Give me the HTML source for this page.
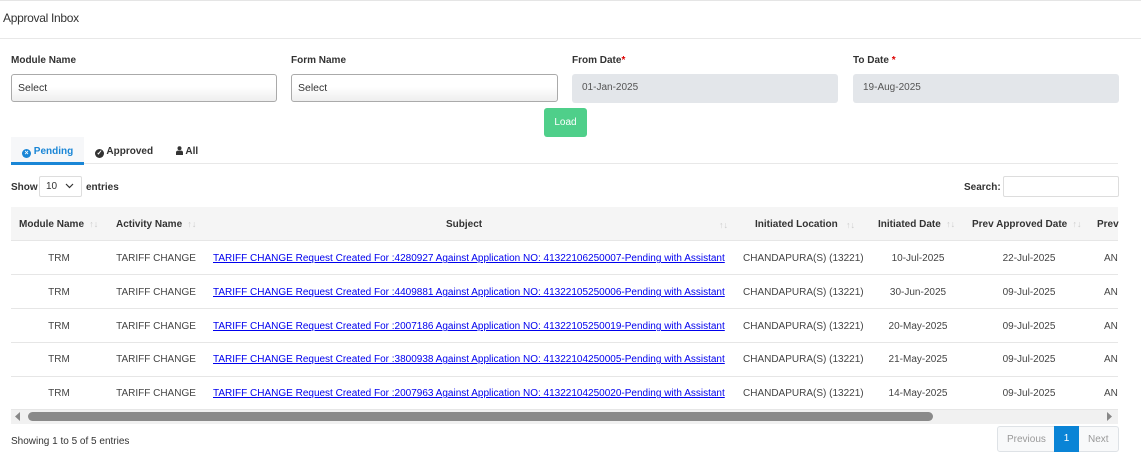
<!DOCTYPE html>
<html><head><meta charset="utf-8"><style>
*{margin:0;padding:0;box-sizing:border-box}
body{width:1141px;height:452px;overflow:hidden;background:#fff;font-family:"Liberation Sans",sans-serif;color:#333;position:relative;font-size:10px}
.a{position:absolute;white-space:nowrap}
.lbl{font-weight:bold;font-size:10px;color:#333}
.inp{position:absolute;height:28px;border:1px solid #aaa;border-radius:3px;background:linear-gradient(#fff,#fff 45%,#eee);font-size:10.5px;padding:7px 6px;color:#333}
.dis{position:absolute;height:29px;border-radius:3px;background:#e3e6ea;font-size:10px;padding:8px 10px;color:#555}
.hd{font-weight:bold;font-size:10px;color:#333}
.s{color:#ccc;font-size:9px}
.c{position:absolute;text-align:center;font-size:10px;color:#444;white-space:nowrap}
.lk{position:absolute;left:213px;color:#0000ee;text-decoration:underline;font-size:10px;letter-spacing:0;white-space:nowrap}
.ln{position:absolute;left:11px;width:1107px;height:1px;background:#e6e6e6}
</style></head><body>
<div style="position:absolute;left:0;top:0;width:1141px;height:1px;background:#e5e5e5"></div>
<div class="a" style="left:3px;top:11px;font-size:12px;color:#333;letter-spacing:-0.3px">Approval Inbox</div>
<div style="position:absolute;left:0;top:38px;width:1141px;height:1px;background:#e8e8e8"></div>

<div class="a lbl" style="left:11px;top:55px">Module Name</div>
<div class="a lbl" style="left:291px;top:55px">Form Name</div>
<div class="a lbl" style="left:572px;top:55px">From Date<span style="color:#d00">*</span></div>
<div class="a lbl" style="left:853px;top:55px">To Date <span style="color:#d00">*</span></div>
<div class="inp" style="left:11px;top:74px;width:266px">Select</div>
<div class="inp" style="left:291px;top:74px;width:267px">Select</div>
<div class="dis" style="left:572px;top:74px;width:266px">01-Jan-2025</div>
<div class="dis" style="left:853px;top:74px;width:266px">19-Aug-2025</div>
<div class="a" style="left:544px;top:108px;width:43px;height:29px;background:#4fcf8a;border-radius:3px;color:#fff;font-size:10px;text-align:center;line-height:29px">Load</div>

<div style="position:absolute;left:11px;top:137px;width:73px;height:26px;background:#f6f7f9"></div>
<div style="position:absolute;left:11px;top:163px;width:1107px;height:1px;background:#e8e8e8"></div>
<div style="position:absolute;left:11px;top:162px;width:73px;height:3px;background:#1a86d6"></div>
<div class="a" style="left:22px;top:146px;font-size:10px;font-weight:bold;color:#1a86d6"><span style="display:inline-block;width:9px;height:9px;border-radius:50%;background:#1a86d6;color:#fff;font-size:7px;line-height:9px;text-align:center;vertical-align:-1px">×</span> Pending</div>
<div class="a" style="left:95px;top:146px;font-size:10px;font-weight:bold;color:#333"><span style="display:inline-block;width:9px;height:9px;border-radius:50%;background:#333;color:#fff;font-size:7px;line-height:9px;text-align:center;vertical-align:-1px">✓</span> Approved</div>
<div class="a" style="left:176px;top:146px;font-size:10px;font-weight:bold;color:#333"><svg width="7" height="9" viewBox="0 0 7 9" style="vertical-align:-1px"><circle cx="3.5" cy="2.2" r="2" fill="#333"/><path d="M0 9V6.5Q0 4.6 2 4.6H5Q7 4.6 7 6.5V9Z" fill="#333"/></svg> All</div>

<div class="a" style="left:11px;top:182px;font-size:10px;font-weight:bold;color:#333">Show</div>
<div style="position:absolute;left:39px;top:176px;width:43px;height:21px;border:1px solid #ddd;border-radius:2px;font-size:10px;padding:4px 6px;color:#333">10 <svg width="9" height="6" viewBox="0 0 9 6" style="margin-left:5px"><path d="M1 1l3.5 3.5L8 1" stroke="#333" stroke-width="1.2" fill="none"/></svg></div>
<div class="a" style="left:86px;top:182px;font-size:10px;font-weight:bold;color:#333">entries</div>
<div class="a" style="left:964px;top:182px;font-size:10px;font-weight:bold;color:#333">Search:</div>
<div style="position:absolute;left:1003px;top:176px;width:116px;height:21px;border:1px solid #ddd;border-radius:2px"></div>

<div style="position:absolute;left:11px;top:207px;width:1107px;height:34px;background:#f5f5f5"></div>
<div class="a hd" style="left:19px;top:219px">Module Name <span class="s">&nbsp;↑↓</span></div>
<div class="a hd" style="left:116px;top:219px">Activity Name <span class="s">&nbsp;↑↓</span></div>
<div class="a hd" style="left:446px;top:219px">Subject</div>
<div class="a s" style="left:719px;top:220px">↑↓</div>
<div class="a hd" style="left:755px;top:219px">Initiated Location</div>
<div class="a s" style="left:846px;top:220px">↑↓</div>
<div class="a hd" style="left:878px;top:219px">Initiated Date <span class="s">&nbsp;↑↓</span></div>
<div class="a hd" style="left:972px;top:219px">Prev Approved Date <span class="s">&nbsp;↑↓</span></div>
<div class="a hd" style="left:1097px;top:219px">Prev</div>

<div class="ln" style="top:240px"></div>
<div class="ln" style="top:274px"></div>
<div class="ln" style="top:308px"></div>
<div class="ln" style="top:342px"></div>
<div class="ln" style="top:376px"></div>
<div class="ln" style="top:409px"></div>

<div class="c" style="left:29px;width:60px;top:253px">TRM</div><div class="c" style="left:106px;width:100px;top:253px">TARIFF CHANGE</div>
<div class="lk" style="top:253px">TARIFF CHANGE Request Created For :4280927 Against Application NO: 41322106250007-Pending with Assistant</div>
<div class="c" style="left:743px;width:120px;top:253px">CHANDAPURA(S) (13221)</div><div class="c" style="left:878px;width:80px;top:253px">10-Jul-2025</div><div class="c" style="left:989px;width:80px;top:253px">22-Jul-2025</div><div class="c" style="left:1104px;top:253px">AN</div>

<div class="c" style="left:29px;width:60px;top:287px">TRM</div><div class="c" style="left:106px;width:100px;top:287px">TARIFF CHANGE</div>
<div class="lk" style="top:287px">TARIFF CHANGE Request Created For :4409881 Against Application NO: 41322105250006-Pending with Assistant</div>
<div class="c" style="left:743px;width:120px;top:287px">CHANDAPURA(S) (13221)</div><div class="c" style="left:878px;width:80px;top:287px">30-Jun-2025</div><div class="c" style="left:989px;width:80px;top:287px">09-Jul-2025</div><div class="c" style="left:1104px;top:287px">AN</div>

<div class="c" style="left:29px;width:60px;top:321px">TRM</div><div class="c" style="left:106px;width:100px;top:321px">TARIFF CHANGE</div>
<div class="lk" style="top:321px">TARIFF CHANGE Request Created For :2007186 Against Application NO: 41322105250019-Pending with Assistant</div>
<div class="c" style="left:743px;width:120px;top:321px">CHANDAPURA(S) (13221)</div><div class="c" style="left:878px;width:80px;top:321px">20-May-2025</div><div class="c" style="left:989px;width:80px;top:321px">09-Jul-2025</div><div class="c" style="left:1104px;top:321px">AN</div>

<div class="c" style="left:29px;width:60px;top:354px">TRM</div><div class="c" style="left:106px;width:100px;top:354px">TARIFF CHANGE</div>
<div class="lk" style="top:354px">TARIFF CHANGE Request Created For :3800938 Against Application NO: 41322104250005-Pending with Assistant</div>
<div class="c" style="left:743px;width:120px;top:354px">CHANDAPURA(S) (13221)</div><div class="c" style="left:878px;width:80px;top:354px">21-May-2025</div><div class="c" style="left:989px;width:80px;top:354px">09-Jul-2025</div><div class="c" style="left:1104px;top:354px">AN</div>

<div class="c" style="left:29px;width:60px;top:388px">TRM</div><div class="c" style="left:106px;width:100px;top:388px">TARIFF CHANGE</div>
<div class="lk" style="top:388px">TARIFF CHANGE Request Created For :2007963 Against Application NO: 41322104250020-Pending with Assistant</div>
<div class="c" style="left:743px;width:120px;top:388px">CHANDAPURA(S) (13221)</div><div class="c" style="left:878px;width:80px;top:388px">14-May-2025</div><div class="c" style="left:989px;width:80px;top:388px">09-Jul-2025</div><div class="c" style="left:1104px;top:388px">AN</div>

<div style="position:absolute;left:11px;top:410px;width:1107px;height:14px;background:#f1f1f1"></div>
<svg class="a" style="left:15px;top:412px" width="6" height="9"><path d="M5 0L0 4.5 5 9Z" fill="#888"/></svg>
<div style="position:absolute;left:28px;top:412px;width:905px;height:9px;border-radius:5px;background:#8a8a8a"></div>
<svg class="a" style="left:1107px;top:412px" width="6" height="9"><path d="M0 0L5 4.5 0 9Z" fill="#888"/></svg>

<div class="a" style="left:11px;top:436px;font-size:10px;color:#333">Showing 1 to 5 of 5 entries</div>
<div style="position:absolute;left:997px;top:426px;width:122px;height:26px;border:1px solid #dee2e6;border-radius:3px;background:#f8f9fa"></div>
<div class="a" style="left:1007px;top:434px;color:#999;font-size:10px">Previous</div>
<div style="position:absolute;left:1054px;top:426px;width:25px;height:26px;background:#0a84d6;color:#fff;font-size:10px;text-align:center;line-height:26px">1</div>
<div class="a" style="left:1088px;top:434px;color:#999;font-size:10px">Next</div>
</body></html>
